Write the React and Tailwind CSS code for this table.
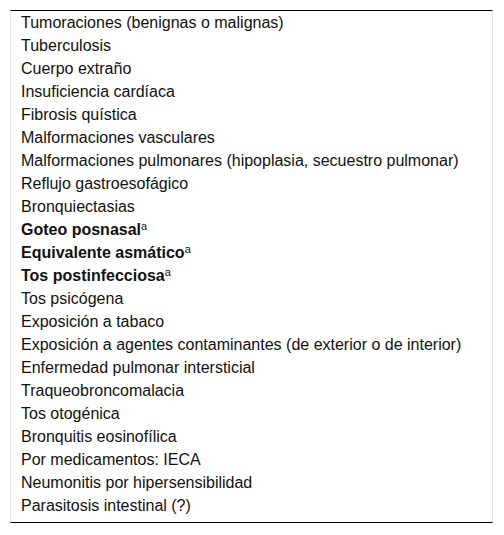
import React from "react";

const rows = [
  ["Tumoraciones (benignas o malignas)"],
  ["Tuberculosis"],
  ["Cuerpo extraño"],
  ["Insuficiencia cardíaca"],
  ["Fibrosis quística"],
  ["Malformaciones vasculares"],
  ["Malformaciones pulmonares (hipoplasia, secuestro pulmonar)"],
  ["Reflujo gastroesofágico"],
  ["Bronquiectasias"],
  ["Goteo posnasal", true],
  ["Equivalente asmático", true],
  ["Tos postinfecciosa", true],
  ["Tos psicógena"],
  ["Exposición a tabaco"],
  ["Exposición a agentes contaminantes (de exterior o de interior)"],
  ["Enfermedad pulmonar intersticial"],
  ["Traqueobroncomalacia"],
  ["Tos otogénica"],
  ["Bronquitis eosinofílica"],
  ["Por medicamentos: IECA"],
  ["Neumonitis por hipersensibilidad"],
  ["Parasitosis intestinal (?)"],
];

export default function App() {
  return (
    <div className="w-[504px] h-[535px] bg-white pt-[10px] pl-[10px] font-['Liberation_Sans'] text-[16px] text-[#111]">
      <div className="w-[483px] border-t border-b border-t-black border-b-black border-l border-r border-l-[#e5e5e5] border-r-[#e5e5e5] pb-[5px]">
        {rows.map(([t, b], i) => (
          <div key={i} className="h-[23px] leading-[23px] pl-[10px] whitespace-nowrap">
            {b ? (
              <>
                <span className="font-bold">{t}</span>
                <sup className="text-[11px]">a</sup>
              </>
            ) : (
              t
            )}
          </div>
        ))}
      </div>
    </div>
  );
}
